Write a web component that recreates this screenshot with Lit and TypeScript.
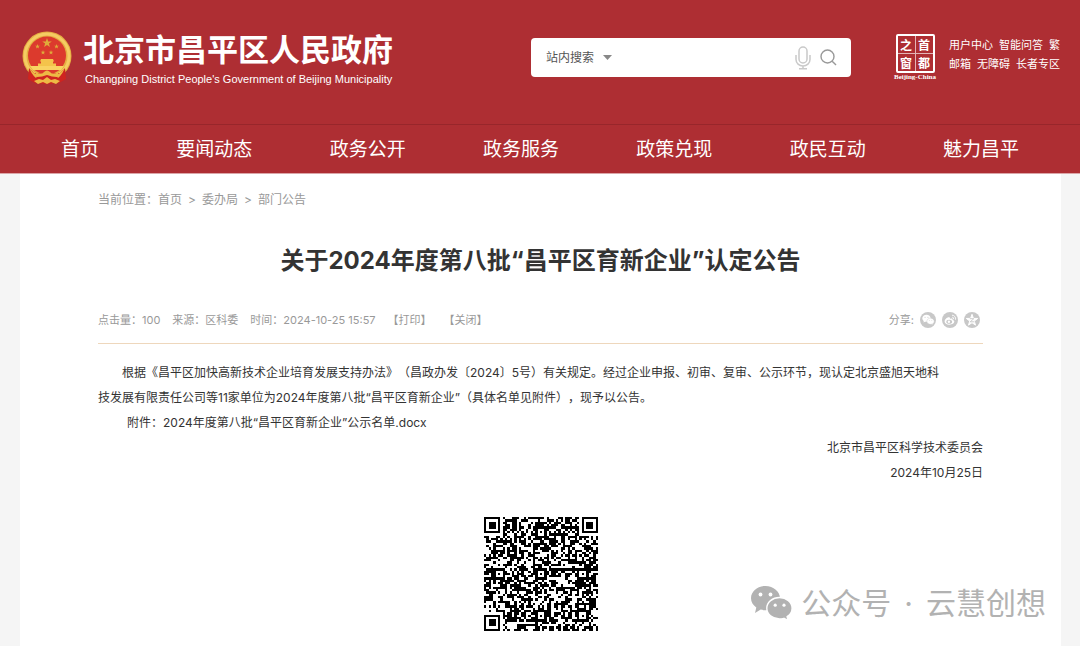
import { LitElement, html, css, svg } from "lit";
import { customElement } from "lit/decorators.js";

const NAV = ["首页", "要闻动态", "政务公开", "政务服务", "政策兑现", "政民互动", "魅力昌平"];
const TOP_LINKS = [
  ["用户中心", "智能问答", "繁"],
  ["邮箱", "无障碍", "长者专区"],
];
const SIZE = 49;

/** Builds a version 8 sized QR symbol: finders, timing, alignment and data area. */
function qrPath(): string {
  const finders = [[0, 0], [SIZE - 7, 0], [0, SIZE - 7]];
  const aligns = [[24, 6], [6, 24], [24, 24], [42, 24], [24, 42], [42, 42]];
  let seed = 20241025;
  const next = () => {
    seed = (Math.imul(seed, 1664525) + 1013904223) >>> 0;
    return seed / 4294967296;
  };
  let d = "";
  for (let y = 0; y < SIZE; y++) {
    for (let x = 0; x < SIZE; x++) {
      let on = next() < 0.53;
      if (y === 6 || x === 6) on = (x + y) % 2 === 0;
      for (const [ax, ay] of aligns) {
        const r = Math.max(Math.abs(x - ax), Math.abs(y - ay));
        if (r <= 2) on = r !== 1;
      }
      for (const [fx, fy] of finders) {
        const r = Math.max(Math.abs(x - fx - 3), Math.abs(y - fy - 3));
        if (r <= 4) on = r !== 4 && r !== 2;
      }
      if (on) d += `M${x} ${y}h1v1h-1z`;
    }
  }
  return d;
}
const QR = qrPath();

const star = (cx: number, cy: number, r: number) => {
  const pts: string[] = [];
  for (let i = 0; i < 10; i++) {
    const a = (Math.PI * i) / 5 - Math.PI / 2;
    const k = i % 2 ? r * 0.4 : r;
    pts.push(`${(cx + k * Math.cos(a)).toFixed(2)},${(cy + k * Math.sin(a)).toFixed(2)}`);
  }
  return pts.join(" ");
};

const emblem = html`<svg class="emblem" viewBox="0 0 50 54" aria-hidden="true">
  <circle cx="25" cy="25" r="24.500" fill="#e5ae42" />
  <circle cx="25" cy="25" r="22" fill="none" stroke="#f5cc63" stroke-width="3" />
  <circle cx="25" cy="24.500" r="19" fill="#dc3a2d" />
  <path d="M7 37 L6 48 L13 52 L25 53 L37 52 L44 48 L43 37 L38 42 H12Z" fill="#cf2420" />
  <polygon points="${star(25, 12, 5)}" fill="#dfab3a" />
  ${[[15.5, 15.5], [34.5, 15.5], [21, 21.5], [29, 21.5]].map(
    ([x, y]) => svg`<polygon points=${star(x, y, 2.5)} fill="#dfab3a" />`
  )}
  <path d="M19 28h12l1 2.500h-1v2h3v3H16v-3h3v-2h-1z" fill="#f4c34b" />
  <path d="M8 35h34l-3 4H11z" fill="#f9d262" />
  <path d="M7 36 Q10 42 16 44 L14 47 Q9 43 7 36zM43 36 Q40 42 34 44 L36 47 Q41 43 43 36z" fill="#edb945" />
  <path d="M13 41 Q20 44 22 41 Q25 38 28 41 Q30 44 37 41 L35 46 Q30 46 25 44 Q20 46 15 46Z" fill="#edb945" />
  <path d="M12 50 L17 48 L21 49 L25 46 L29 49 L33 48 L38 50 L34 53 L29 51 L25 53 L21 51 L16 53Z" fill="#edb945" />
</svg>`;

const wechatShapes = (fg: string, bg: string) => svg`
  <path d="M15.500 1C7.500 1 1 6.500 1 13.200c0 3.800 2.100 7 5.300 9.200L5 28l5.700-3.400c1.500.4 3.200.6 4.800.6C23.500 25.200 30 19.700 30 13.200S23.500 1 15.500 1z" fill=${fg} />
  <circle cx="10.500" cy="9.500" r="1.900" fill=${bg} /><circle cx="20.500" cy="9.500" r="1.900" fill=${bg} />
  <path d="M29.500 12.500c-7 0-12.700 4.700-12.700 10.700s5.700 10.700 12.700 10.700c1.500 0 3-.2 4.400-.6l4.400 2.400-1.200-4c3-2 5-5 5-8.500 0-6-5.600-10.700-12.600-10.700z" fill=${fg} stroke=${bg} stroke-width="1.400" />
  <circle cx="25.200" cy="20.200" r="1.600" fill=${bg} /><circle cx="34" cy="20.200" r="1.600" fill=${bg} />`;

@customElement("app-root")
export class AppRoot extends LitElement {
  static styles = css`
    :host {
      display: block;
      font-family: "Inter", "Noto Sans CJK SC", sans-serif;
      color: #333;
      background: #f5f5f5;
      min-height: 100vh;
      position: relative;
      text-spacing-trim: space-all;
    }
    * { box-sizing: border-box; }
    a { color: inherit; text-decoration: none; }
    svg { display: block; }
    button { border: 0; padding: 0; background: none; cursor: pointer; font: inherit; color: inherit; }
    .page { min-height: 100vh; display: flex; flex-direction: column; }
    .banner {
      height: 124px;
      padding: 0 20px 9px 22px;
      background: #ae2e33;
      color: #fff;
      display: flex;
      align-items: center;
    }
    .brand { display: flex; align-items: center; gap: 11px; }
    .emblem { width: 50px; height: 54px; }
    .names { padding-top: 4px; display: flex; flex-direction: column; gap: 5px; }
    .site { margin: 0; font-size: 31px; line-height: 34px; font-weight: 700; white-space: nowrap; }
    .latin { margin: 0 0 0 2px; font: 11px/14px "Liberation Sans", sans-serif; white-space: nowrap; }
    .search {
      flex: none;
      width: 320px;
      height: 39px;
      margin-left: auto;
      padding: 0 14px 0 15px;
      border-radius: 4px;
      background: #fff;
      color: #555;
      display: flex;
      align-items: center;
    }
    .scope { display: grid; align-items: center; }
    .scope select {
      grid-area: 1 / 1;
      appearance: none;
      border: 0;
      margin: 0;
      padding: 0 17px 0 0;
      background: none;
      color: inherit;
      font: inherit;
      font-size: 12px;
      line-height: 20px;
    }
    .caret { grid-area: 1 / 1; justify-self: end; width: 9px; height: 5px; pointer-events: none; }
    .query { flex: 1; min-width: 0; border: 0; outline: 0; background: none; font: inherit; font-size: 12px; }
    .mic { width: 16px; height: 24px; margin-right: 9px; }
    .glass { width: 17px; height: 17px; }
    .seal { margin-left: 42px; width: 44px; display: flex; flex-direction: column; align-items: center; }
    .stamp {
      width: 39px;
      height: 39px;
      border: 2px solid #fff;
      border-radius: 2px;
      display: grid;
      grid-template: 17px 17px / 17px 17px;
      gap: 1px;
      background: #e3b3b5;
      font: 700 12px/17px "Noto Sans CJK SC", sans-serif;
      text-align: center;
    }
    .stamp span { background: #ae2e33; }
    .cap { font: 700 7px/8px "Liberation Serif", serif; white-space: nowrap; }
    .tools { margin: 0 0 6px 12px; font-size: 11px; line-height: 19px; }
    .tools div { display: flex; justify-content: space-between; gap: 6px; white-space: nowrap; }
    .nav {
      padding: 1px 61px 0;
      height: 50px;
      border-top: 1px solid #98262b;
      border-bottom: 1px solid #dba6a8;
      background: #ae2e33;
      color: #fff;
      display: flex;
      justify-content: space-between;
      align-items: center;
      font-size: 19px;
      line-height: 28px;
    }
    .card { flex: 1; margin: 0 19px 0 20px; padding: 16px 78px; background: #fff; }
    .crumbs { display: flex; gap: 6px; font-size: 12px; line-height: 20px; color: #999; }
    .title { margin: 35px 0 0; font-size: 24px; line-height: 32px; font-weight: 700; text-align: center; }
    .meta {
      margin-top: 29px;
      padding: 0 3px 9px 0;
      min-height: 38px;
      border-bottom: 1px solid #eed7bc;
      display: flex;
      align-items: center;
      font-size: 11px;
      line-height: 20px;
      color: #999;
    }
    .facts { display: flex; gap: 12px; }
    .share { margin-left: auto; display: flex; align-items: center; gap: 6px; }
    .round { width: 16px; height: 16px; }
    .body { padding-top: 16px; font-size: 12px; line-height: 25px; }
    .body p { margin: 0; }
    .lead { text-indent: 2em; }
    .file { padding-left: 29px; }
    .sign { text-align: right; }
    .qr { width: 114px; height: 114px; margin: 32px auto 0; }
    .mark {
      position: absolute;
      right: 34px;
      bottom: 24px;
      display: flex;
      align-items: center;
      gap: 8px;
      color: #b2b2b2;
      font-size: 30px;
      line-height: 40px;
    }
    .bubbles { width: 43px; height: 36px; }
    .who { display: flex; gap: 13px; }
  `;

  render() {
    return html`
      <div class="page" lang="zh-CN">
        <header class="banner">
          <div class="brand">
            ${emblem}
            <div class="names">
              <h2 class="site">北京市昌平区人民政府</h2>
              <p class="latin">Changping District People's Government of Beijing Municipality</p>
            </div>
          </div>
          <form class="search" @submit=${(e: Event) => e.preventDefault()}>
            <div class="scope">
              <select aria-label="搜索范围"><option>站内搜索</option></select>
              <svg class="caret" viewBox="0 0 9 5"><path d="M0 0h9L4.500 5z" fill="#888" /></svg>
            </div>
            <input class="query" type="text" aria-label="搜索" />
            <button class="mic" type="button" aria-label="语音">
              <svg viewBox="0 0 16 24" fill="none" stroke="#c9c9c9" stroke-width="1.500">
                <rect x="4" y="1" width="8" height="16" rx="4" />
                <path d="M1 9v4.500a7 6.500 0 0 0 14 0V9M8 20v2.500M4 22.700h8" />
              </svg>
            </button>
            <button class="glass" type="submit" aria-label="搜索">
              <svg viewBox="0 0 17 17" fill="none" stroke="#999" stroke-width="1.400">
                <circle cx="7.500" cy="7.500" r="6.500" /><path d="M12.200 12.200l3.800 3.800" />
              </svg>
            </button>
          </form>
          <div class="seal">
            <div class="stamp"><span>之</span><span>首</span><span>窗</span><span>都</span></div>
            <div class="cap">Beijing-China</div>
          </div>
          <div class="tools">
            ${TOP_LINKS.map((row) => html`<div>${row.map((t) => html`<a href="#">${t}</a>`)}</div>`)}
          </div>
        </header>
        <nav class="nav">${NAV.map((t) => html`<a href="#">${t}</a>`)}</nav>
        <main class="card">
          <div class="crumbs">
            <span>当前位置：<a href="#">首页</a></span><span>&gt;</span><a href="#">委办局</a><span>&gt;</span><a href="#">部门公告</a>
          </div>
          <h1 class="title">关于2024年度第八批“昌平区育新企业”认定公告</h1>
          <div class="meta">
            <div class="facts">
              <span>点击量：100</span><span>来源：区科委</span><span>时间：2024-10-25 15:57</span>
              <button type="button">【打印】</button><button type="button">【关闭】</button>
            </div>
            <div class="share">
              <span>分享:</span>
              <a href="#" aria-label="微信"><svg class="round" viewBox="0 0 16 16">
                <circle cx="8" cy="8" r="8" fill="#c8c8c8" />
                <g transform="translate(2 2.500) scale(.29)">${wechatShapes("#fff", "#c8c8c8")}</g>
              </svg></a>
              <a href="#" aria-label="微博"><svg class="round" viewBox="0 0 16 16" fill="none" stroke="#fff">
                <circle cx="8" cy="8" r="8" fill="#c8c8c8" stroke="none" />
                <path d="M7 5.200C5 5 2.600 7.500 2.600 9.500c0 1.800 2 3.200 4.700 3.200 3 0 5-1.500 5-3.100 0-1-.7-1.500-1.700-1.700.3-1.200-.6-1.700-2.400-1C8.400 5.900 8 5.300 7 5.200z" fill="#fff" stroke="none" />
                <ellipse cx="7.200" cy="9.700" rx="2.900" ry="2" fill="#c8c8c8" stroke="none" />
                <circle cx="6.900" cy="9.800" r="1.200" fill="#fff" stroke="none" />
                <path d="M10 3.200a3.600 3.600 0 0 1 3.500 4.500M10.200 5.200a1.700 1.700 0 0 1 1.500 2" stroke-width=".9" />
              </svg></a>
              <a href="#" aria-label="QQ空间"><svg class="round" viewBox="0 0 16 16">
                <circle cx="8" cy="8" r="8" fill="#c8c8c8" />
                <polygon points=${star(8, 8.3, 6)} fill="#fff" stroke="#fff" stroke-width="1" stroke-linejoin="round" />
                <path d="M5.800 6.700h4L6.200 9.800h4.200" fill="none" stroke="#c8c8c8" stroke-width=".9" />
              </svg></a>
            </div>
          </div>
          <article class="body">
            <p class="lead">
              根据《昌平区加快高新技术企业培育发展支持办法》（昌政办发〔2024〕5号）有关规定。经过企业申报、初审、复审、公示环节，现认定北京盛旭天地科<br />技发展有限责任公司等11家单位为2024年度第八批“昌平区育新企业”（具体名单见附件），现予以公告。
            </p>
            <p class="file">附件：<a href="#">2024年度第八批“昌平区育新企业”公示名单.docx</a></p>
            <p class="sign">北京市昌平区科学技术委员会</p>
            <p class="sign">2024年10月25日</p>
          </article>
          <svg class="qr" viewBox="0 0 ${SIZE} ${SIZE}" shape-rendering="crispEdges" role="img" aria-label="二维码">
            <path d=${QR} fill="#000" />
          </svg>
        </main>
      </div>
      <div class="mark">
        <svg class="bubbles" viewBox="0 0 43 36">${wechatShapes("#b2b2b2", "#fff")}</svg>
        <span class="who"><span>公众号</span><span>·</span><span>云慧创想</span></span>
      </div>
    `;
  }
}
